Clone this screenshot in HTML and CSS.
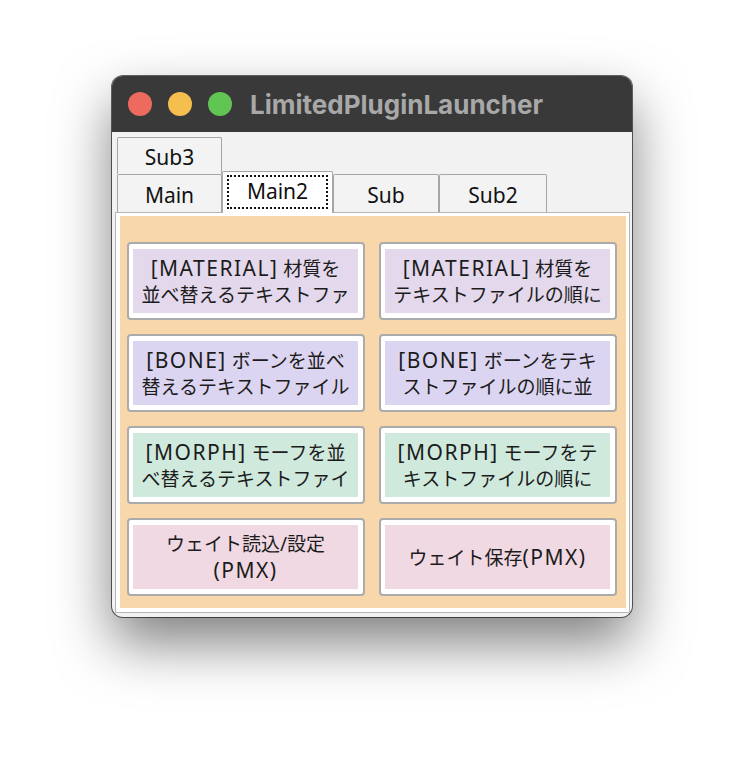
FILE: index.html
```html
<!DOCTYPE html>
<html lang="ja">

<head>
    <meta charset="UTF-8">
    <title>LimitedPluginLauncher</title>
    <link rel="stylesheet" href="styles.css">
</head>

<body>
    <div class="window">
        <div class="titlebar">
            <span class="light red"></span>
            <span class="light yellow"></span>
            <span class="light green"></span>
            <span class="title">LimitedPluginLauncher</span>
        </div>
        <div class="client">
            <div class="tab-row top-row">
                <div class="tab t1">Sub3</div>
            </div>
            <div class="tab-row">
                <div class="tab t1">Main</div>
                <div class="tab selected"><span class="focus">Main2</span></div>
                <div class="tab t3">Sub</div>
                <div class="tab t4">Sub2</div>
            </div>
            <div class="panel">
                <div class="grid">
                    <div class="btn"><div class="face material"><span class="en">[MATERIAL]</span> 材質を<br>並べ替えるテキストファ</div></div>
                    <div class="btn"><div class="face material"><span class="en">[MATERIAL]</span> 材質を<br>テキストファイルの順に</div></div>
                    <div class="btn"><div class="face bone"><span class="en">[BONE]</span> ボーンを並べ<br>替えるテキストファイル</div></div>
                    <div class="btn"><div class="face bone"><span class="en">[BONE]</span> ボーンをテキ<br>ストファイルの順に並</div></div>
                    <div class="btn"><div class="face morph"><span class="en">[MORPH]</span> モーフを並<br>べ替えるテキストファイ</div></div>
                    <div class="btn"><div class="face morph"><span class="en">[MORPH]</span> モーフをテ<br>キストファイルの順に</div></div>
                    <div class="btn"><div class="face weight">ウェイト読込/設定<br><span class="en">(PMX)</span></div></div>
                    <div class="btn"><div class="face weight single">ウェイト保存<span class="en">(PMX)</span></div></div>
                </div>
            </div>
        </div>
    </div>
</body>

</html>
```

FILE: styles.css
```css
body {
    margin: 0;
    height: 766px;
    overflow: hidden;
    background-color: #ffffff;
    font-family: "Noto Sans", "Noto Sans CJK JP", sans-serif;
}

.window {
    margin: 76px 0 0 112px;
    width: 520px;
    height: 541px;
    border-radius: 11px;
    overflow: hidden;
    background-color: #f2f2f2;
    box-shadow: 0 0 0 1px rgba(0, 0, 0, 0.6), 0 26px 55px rgba(0, 0, 0, 0.5);
}

.titlebar {
    height: 56px;
    background-color: #393939;
    display: flex;
    align-items: center;
    padding-left: 16px;
    box-sizing: border-box;
}

.light {
    width: 24px;
    height: 24px;
    border-radius: 50%;
    margin-right: 16px;
}

.red {
    background-color: #ec6a5e;
}

.yellow {
    background-color: #f4bf4f;
}

.green {
    background-color: #61c554;
}

.title {
    margin-left: 2px;
    font-family: "Inter", sans-serif;
    font-weight: 700;
    font-size: 26px;
    color: #a8a8a8;
}

.client {
    padding: 5px 2px 4px 3px;
}

.tab-row {
    display: flex;
    padding-left: 2px;
    height: 37px;
    align-items: flex-end;
}

.tab-row + .tab-row {
    height: 38px;
    position: relative;
    z-index: 1;
}

.tab {
    height: 100%;
    box-sizing: border-box;
    border: 1px solid #a6a6a6;
    border-bottom: none;
    border-radius: 2px 2px 0 0;
    background-color: #f3f3f3;
    display: flex;
    justify-content: center;
    align-items: center;
    font-size: 21px;
    color: #111;
    padding-top: 2px;
}

.t1 {
    width: 105px;
}

.t3 {
    width: 106px;
}

.t4 {
    width: 108px;
}

.tab.selected {
    width: 111px;
    height: 42px;
    background-color: #ffffff;
    margin-bottom: -1px;
    padding-top: 0;
    align-items: flex-start;
}

.focus {
    margin-top: 3px;
    width: 101px;
    height: 34px;
    box-sizing: border-box;
    border: 2px dotted #111;
    text-align: center;
    line-height: 28px;
}

.panel {
    height: 401px;
    box-sizing: border-box;
    border: 1px solid #b5b5b5;
    background-color: #ffffff;
    padding: 3px 3px 4px 4px;
}

.grid {
    height: 100%;
    background-color: #f8d8aa;
    display: grid;
    grid-template-columns: 238px 238px;
    grid-auto-rows: 78px;
    column-gap: 14px;
    row-gap: 14px;
    padding: 26px 0 0 7px;
    box-sizing: border-box;
}

.btn {
    border: 2px solid #ababab;
    border-radius: 4px;
    background-color: #ffffff;
    padding: 5px 5px 5px 4px;
    display: flex;
}

.face {
    flex: 1;
    padding-top: 6px;
    box-sizing: border-box;
    text-align: center;
    font-size: 19px;
    line-height: 26px;
    color: #1c1c1c;
    white-space: nowrap;
    overflow: hidden;
}

.face.single {
    padding-top: 19px;
}

.en {
    font-size: 21px;
    letter-spacing: 1.5px;
}

.material {
    background-color: #e4d8ec;
}

.bone {
    background-color: #dcd5f1;
}

.morph {
    background-color: #cfe9dc;
}

.weight {
    background-color: #f1d9e3;
}
```
